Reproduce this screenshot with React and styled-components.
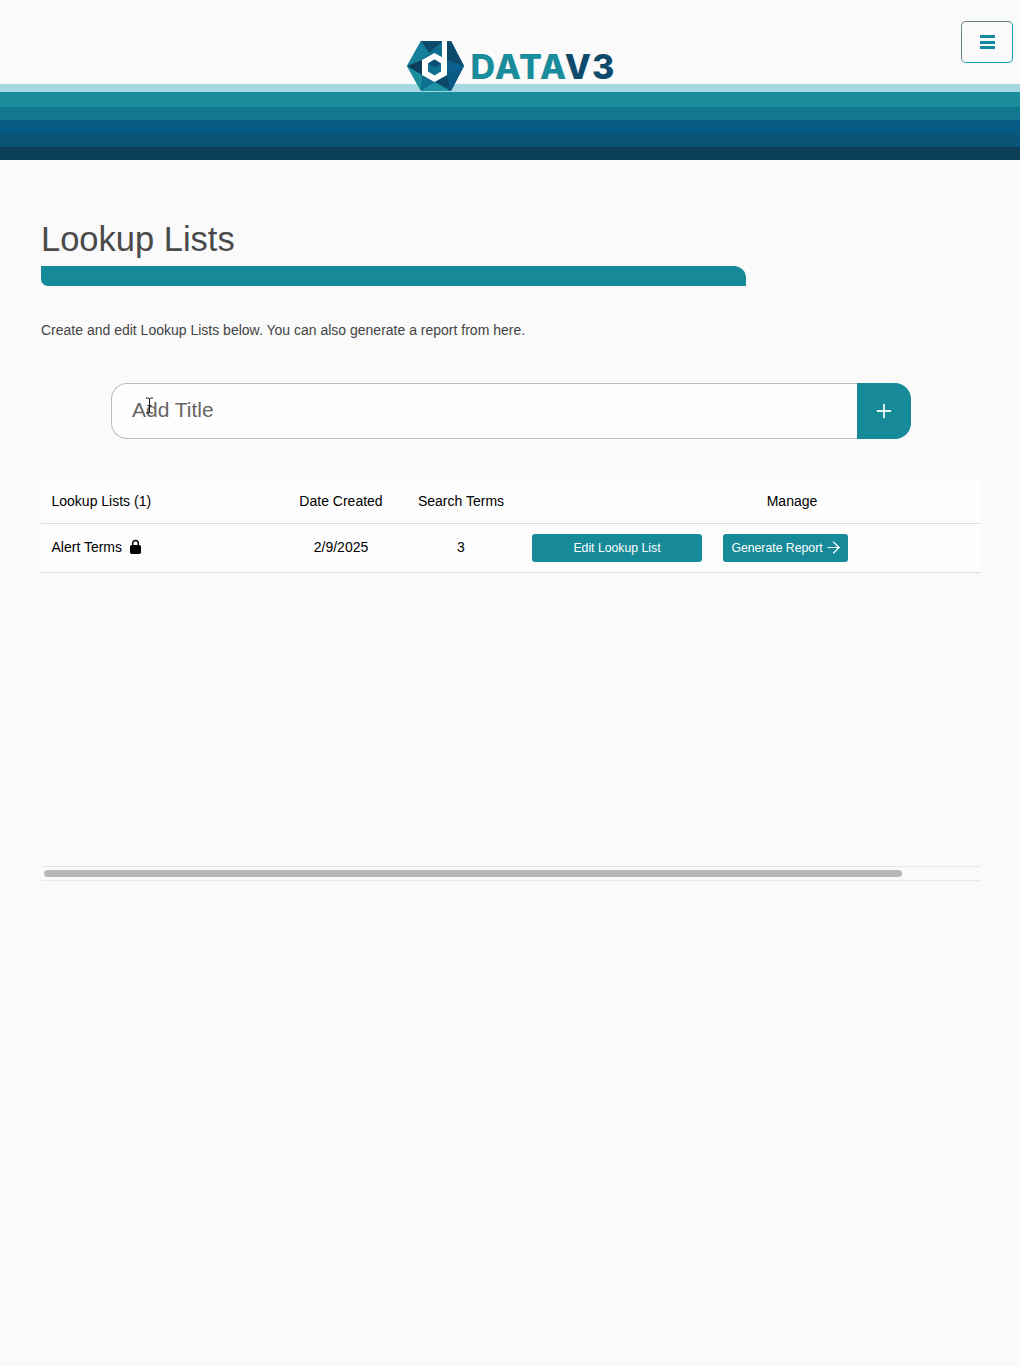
import styled, { createGlobalStyle } from 'styled-components';
import { ArrowRight, Plus } from 'lucide-react';

const TEAL = "#178a9a";
const BANDS = ["#a6d8e2", "#198d9c", "#12788f", "#065a84", "#0a5478", "#0c4059"];
const BAND_HEIGHTS = [8, 15, 13, 14, 13, 13];

const lists = [
    { id: 1, title: "Alert Terms", created: "2/9/2025", terms: 3, locked: true }
];

export default function App() {
    return (
        <Page>
            <GlobalStyle />
            <Header>
                <TopBar>
                    <span />
                    <Logo>
                        <LogoMark />
                        <LogoText>DATA<LogoAccent>V3</LogoAccent></LogoText>
                    </Logo>
                    <MenuButton aria-label="Menu">
                        <MenuLine />
                        <MenuLine />
                        <MenuLine />
                    </MenuButton>
                </TopBar>
                {BANDS.map((color, i) => (
                    <Band key={color} color={color} $height={BAND_HEIGHTS[i]} />
                ))}
            </Header>
            <Main>
                <Title>Lookup Lists</Title>
                <TitleBar />
                <Description>Create and edit Lookup Lists below. You can also generate a report from here.</Description>
                <AddForm>
                    <AddInput type="text" placeholder="Add Title" />
                    <AddButton aria-label="Add"><Plus size={22} strokeWidth={2} /></AddButton>
                    <TextCursor />
                </AddForm>
                <TableScroller>
                    <Table>
                        <colgroup>
                            <col style={{ width: 240 }} />
                            <col style={{ width: 120 }} />
                            <col style={{ width: 120 }} />
                            <col style={{ width: 542 }} />
                        </colgroup>
                        <thead>
                            <tr>
                                <HeadCell $left>Lookup Lists ({lists.length})</HeadCell>
                                <HeadCell>Date Created</HeadCell>
                                <HeadCell>Search Terms</HeadCell>
                                <HeadCell>Manage</HeadCell>
                            </tr>
                        </thead>
                        <tbody>
                            {lists.map((list) => (
                                <tr key={list.id}>
                                    <Cell $left>
                                        <TitleCell>
                                            {list.title}
                                            {list.locked && <LockIcon />}
                                        </TitleCell>
                                    </Cell>
                                    <Cell>{list.created}</Cell>
                                    <Cell>{list.terms}</Cell>
                                    <Cell>
                                        <Actions>
                                            <ActionButton $width={170}>Edit Lookup List</ActionButton>
                                            <ActionButton $width={125}>
                                                Generate Report <ArrowIcon size={19} strokeWidth={1.5} />
                                            </ActionButton>
                                        </Actions>
                                    </Cell>
                                </tr>
                            ))}
                        </tbody>
                    </Table>
                </TableScroller>
                <ScrollTrack>
                    <ScrollThumb />
                </ScrollTrack>
            </Main>
        </Page>
    );
}

function LogoMark() {
    return (
        <svg width="58" height="51" viewBox="0 0 58 51">
            <polygon points="14,0 44,0 57,25 44,50 14,50 0,25" fill="#0f6f90" />
            <polygon points="14,0 36,0 22,12" fill="#0c4a6b" />
            <polygon points="14,0 22,12 15,19 0,25" fill="#14809a" />
            <polygon points="0,25 15,19 15,34" fill="#0c3f5c" />
            <polygon points="0,25 15,34 14,50" fill="#1a8d9c" />
            <polygon points="14,50 15,34 28,41" fill="#0f6f90" />
            <polygon points="14,50 44,50 28,41" fill="#1c93a3" />
            <polygon points="28,41 40,34 44,50" fill="#0c4a6b" />
            <polygon points="40,34 57,25 44,50" fill="#0a5a85" />
            <polygon points="40,19 57,25 40,34" fill="#0b5f8c" />
            <polygon points="40,0 44,0 57,25 40,19" fill="#0c4a6b" />
            <polygon points="27.5,12 40,19 40,34 27.5,41 15,34 15,19" fill="#ffffff" />
            <rect x="35" y="0" width="5" height="20" fill="#ffffff" />
            <polygon points="27.5,18.5 34,22.5 34,30.5 27.5,34.5 21,30.5 21,22.5" fill="#0f6f90" />
            <polygon points="27.5,18.5 34,22.5 27.5,26.5 21,22.5" fill="#0b4f73" />
        </svg>
    );
}

function LockIcon() {
    return (
        <svg width="11" height="15" viewBox="0 0 11 15">
            <path d="M2.7 7V4.2a2.8 2.8 0 0 1 5.6 0V7" fill="none" stroke="#000000" strokeWidth="1.5" />
            <rect x="0" y="6" width="11" height="9" rx="1.8" fill="#000000" />
        </svg>
    );
}

function TextCursor() {
    return (
        <CursorMark width="9" height="18" viewBox="0 0 9 18">
            <path d="M1 1h2.5l1 1 1-1H8M4.5 2v13M1 16h2.5l1-1 1 1H8M2.5 8.5h4" fill="none" stroke="#111111" strokeWidth="1" />
        </CursorMark>
    );
}

const GlobalStyle = createGlobalStyle`
    html, body {
        margin: 0;
        padding: 0;
        background-color: #fafafa;
        font-family: 'Liberation Sans', Arial, sans-serif;
    }

    * {
        box-sizing: border-box;
    }
`;

const Page = styled.div`
    width: 100%;
    min-height: 1366px;
    background-color: #fafafa;
`;

const Header = styled.header`
    display: flex;
    flex-direction: column;
`;

const TopBar = styled.div`
    height: 84px;
    display: grid;
    grid-template-columns: 1fr auto 1fr;
    align-items: start;
    padding: 21px 7px 0 10px;
`;

const Logo = styled.div`
    display: flex;
    align-items: center;
    gap: 5px;
    margin-top: 20px;
    position: relative;
    z-index: 1;
`;

const LogoText = styled.span`
    font-family: 'Inter', sans-serif;
    font-size: 34px;
    font-weight: 800;
    letter-spacing: 1.2px;
    color: #1a8d9c;
    line-height: 1;
`;

const LogoAccent = styled.span`
    color: #0d4a6b;
`;

const MenuButton = styled.button`
    justify-self: end;
    width: 52px;
    height: 42px;
    padding: 0;
    background: transparent;
    border: 1px solid;
    border-color: #6c8088 #12a0bb #12a0bb #6c8088;
    border-radius: 5px;
    display: flex;
    flex-direction: column;
    justify-content: center;
    align-items: center;
    gap: 2.5px;
`;

const MenuLine = styled.span`
    width: 15px;
    height: 3px;
    background-color: #128a9e;
`;

const Band = styled.div`
    height: ${props => props.$height}px;
    background-color: ${props => props.color};
`;

const Main = styled.main`
    padding: 61px 39px 0 41px;
`;

const Title = styled.h1`
    margin: 0;
    height: 45px;
    font-size: 34.5px;
    font-weight: 400;
    line-height: 36px;
    color: #4a4a4a;
`;

const TitleBar = styled.div`
    width: 705px;
    height: 20px;
    background-color: ${TEAL};
    border-radius: 0 12px 0 7px;
`;

const Description = styled.p`
    margin: 36px 0 0 0;
    font-size: 14px;
    line-height: 17px;
    color: #444444;
`;

const AddForm = styled.div`
    position: relative;
    width: 800px;
    height: 56px;
    margin: 44px 0 0 70px;
    display: flex;
`;

const AddInput = styled.input`
    flex: 1;
    min-width: 0;
    height: 100%;
    padding: 0 20px 2px 20px;
    background-color: #fefefe;
    border: 1px solid #bdbdbd;
    border-right: 0;
    border-radius: 16px 0 0 16px;
    font-family: 'Liberation Sans', Arial, sans-serif;
    font-size: 21px;
    color: #333333;
    outline: none;

    &::placeholder {
        color: #666666;
        opacity: 1;
    }
`;

const AddButton = styled.button`
    width: 54px;
    height: 100%;
    padding: 0;
    background-color: ${TEAL};
    border: 0;
    border-radius: 0 16px 16px 0;
    display: flex;
    justify-content: center;
    align-items: center;
    color: #e8f6f8;
`;

const CursorMark = styled.svg`
    position: absolute;
    left: 34px;
    top: 14px;
`;

const TableScroller = styled.div`
    margin-top: 42px;
    height: 385px;
    overflow: hidden;
`;

const Table = styled.table`
    width: 1022px;
    table-layout: fixed;
    border-collapse: collapse;
    background-color: #fdfdfd;
    font-size: 14px;
    color: #000000;
`;

const HeadCell = styled.th`
    height: 42px;
    padding: 0 0 1px ${props => props.$left ? "10.5px" : "0"};
    font-weight: 400;
    text-align: ${props => props.$left ? "left" : "center"};
    border-bottom: 1px solid #dddddd;
`;

const Cell = styled.td`
    height: 49px;
    padding: 0 0 2px ${props => props.$left ? "10.5px" : "0"};
    text-align: ${props => props.$left ? "left" : "center"};
    border-bottom: 1px solid #dddddd;
`;

const TitleCell = styled.span`
    display: inline-flex;
    align-items: center;
    gap: 7.5px;
`;

const Actions = styled.div`
    display: flex;
    gap: 21px;
    padding-left: 11px;
    margin-top: 2px;
`;

const ActionButton = styled.button`
    width: ${props => props.$width}px;
    height: 28px;
    padding: 0;
    background-color: ${TEAL};
    border: 0;
    border-radius: 3px;
    display: flex;
    justify-content: center;
    align-items: center;
    font-family: 'Liberation Sans', Arial, sans-serif;
    font-size: 12.25px;
    color: #ffffff;
`;

const ArrowIcon = styled(ArrowRight)`
    margin: 0 -3px 0 1px;
`;

const ScrollTrack = styled.div`
    height: 15px;
    padding: 3px 0 0 3px;
    border-top: 1px solid #e8e8e8;
    border-bottom: 1px solid #e8e8e8;
`;

const ScrollThumb = styled.div`
    width: 858px;
    height: 7px;
    background-color: #b8b8b8;
    border-radius: 4px;
`;
